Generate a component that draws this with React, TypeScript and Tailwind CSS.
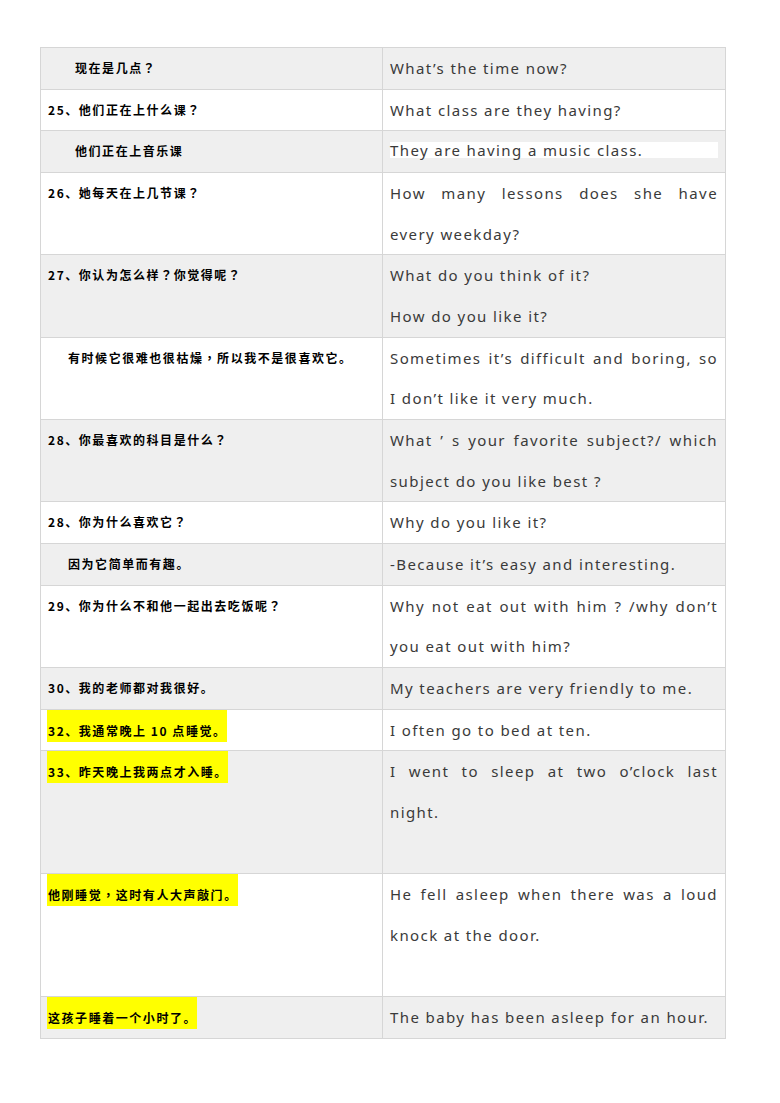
import React from "react";

type Row = {
  zh: string;
  indent?: number;
  hl?: boolean;
  en: string[];
  justify?: boolean;
  gray: boolean;
  special?: boolean;
  lines?: number;
};

const rows: Row[] = [
  { zh: "现在是几点？", indent: 27, en: ["What’s the time now?"], gray: true },
  { zh: "25、他们正在上什么课？", en: ["What class are they having?"], gray: false },
  { zh: "他们正在上音乐课", indent: 27, en: ["They are having a music class."], gray: true, special: true },
  { zh: "26、她每天在上几节课？", en: ["How many lessons does she have", "every weekday?"], justify: true, gray: false },
  { zh: "27、你认为怎么样？你觉得呢？", en: ["What do you think of it?", "How do you like it?"], gray: true },
  { zh: "有时候它很难也很枯燥，所以我不是很喜欢它。", indent: 20, en: ["Sometimes it’s difficult and boring, so", "I don’t like it very much."], justify: true, gray: false },
  { zh: "28、你最喜欢的科目是什么？", en: ["What ’ s your favorite subject?/ which", "subject do you like best ?"], justify: true, gray: true },
  { zh: "28、你为什么喜欢它？", en: ["Why do you like it?"], gray: false },
  { zh: "因为它简单而有趣。", indent: 20, en: ["-Because it’s easy and interesting."], gray: true },
  { zh: "29、你为什么不和他一起出去吃饭呢？", en: ["Why not eat out with him ? /why don’t", "you eat out with him?"], justify: true, gray: false },
  { zh: "30、我的老师都对我很好。", en: ["My teachers are very friendly to me."], gray: true },
  { zh: "32、我通常晚上 10 点睡觉。", hl: true, en: ["I often go to bed at ten."], gray: false },
  { zh: "33、昨天晚上我两点才入睡。", hl: true, en: ["I went to sleep at two o’clock last", "night."], justify: true, gray: true, lines: 3 },
  { zh: "他刚睡觉，这时有人大声敲门。", hl: true, en: ["He fell asleep when there was a loud", "knock at the door."], justify: true, gray: false, lines: 3 },
  { zh: "这孩子睡着一个小时了。", hl: true, en: ["The baby has been asleep for an hour."], gray: true },
];

function Zh({ text }: { text: string }) {
  const parts = text.split(/([？，])/);
  return (
    <>
      {parts.map((p, i) =>
        p === "？" || p === "，" ? (
          <span key={i} className="font-['Noto_Sans_CJK_TC',sans-serif]">
            {p}
          </span>
        ) : (
          <React.Fragment key={i}>{p}</React.Fragment>
        )
      )}
    </>
  );
}

const zhFont = "font-['Noto_Sans_CJK_SC',sans-serif]";
const enFont = "font-['Noto_Sans','Noto_Sans_CJK_SC',sans-serif]";

export default function App() {
  return (
    <div className="min-h-[1103px] w-[780px] bg-white pt-[47px]">
      <div className="ml-[40px] w-[686px] border-l border-t border-[#d6d6d6]">
        {rows.map((r, i) => (
          <div key={i} className={`flex ${r.gray ? "bg-[#efefef]" : "bg-white"}`}>
            <div className={`w-[342px] shrink-0 border-b border-r border-[#d6d6d6] pl-[6px] ${zhFont} text-[12px] font-bold tracking-[1.55px] text-black`}>
              {r.hl ? (
                <span className="inline-block bg-[#ffff00] pl-[1px] pt-[13px] pb-[3px] leading-[16px] align-top">
                  <Zh text={r.zh} />
                </span>
              ) : (
                <div className="leading-[40.67px]" style={{ paddingLeft: (r.indent ?? 0) + 1 }}>
                  <Zh text={r.zh} />
                </div>
              )}
            </div>
            <div className={`w-[343px] shrink-0 border-b border-r border-[#d6d6d6] px-[7px] ${enFont} text-[15px] tracking-[1.4px] text-[#3a3a3a]`}>
              {r.special ? (
                <div className="h-[40.67px] pt-[11px]">
                  <div className="bg-white leading-[16px]">{r.en[0]}</div>
                </div>
              ) : (
                <div className="leading-[40.67px]" style={r.lines ? { minHeight: r.lines * 40.67 } : undefined}>
                  {r.en.map((line, j) => (
                    <div
                      key={j}
                      className={
                        r.justify && j < r.en.length - 1
                          ? "whitespace-nowrap text-justify [text-align-last:justify]"
                          : "whitespace-nowrap"
                      }
                    >
                      {line}
                    </div>
                  ))}
                </div>
              )}
            </div>
          </div>
        ))}
      </div>
    </div>
  );
}
